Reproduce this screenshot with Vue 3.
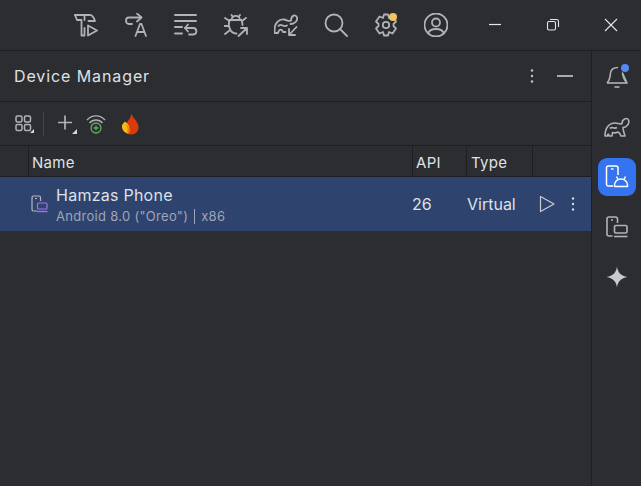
<script setup>
const topIcons = ['build', 'translate', 'wrap', 'bug', 'gradleSync', 'search', 'gear', 'user']
</script>

<template>
  <div class="ide">
    <header class="topbar">
      <div class="top-icons">
        <svg v-for="name in topIcons" :key="name" class="ic24" width="24" height="24" viewBox="0 0 24 24" fill="none" stroke="#b0b2b7" stroke-width="1.800" stroke-linecap="round" stroke-linejoin="round">
          <template v-if="name === 'build'">
            <path d="M1 2H16C18 2 20 5 21 8H14.500" />
            <path d="M1 2L3 7H7.500V22.500H10.500V15" />
            <path d="M10.500 7V2" />
            <path d="M14 12.500L23 17.500L14 22.500Z" />
          </template>
          <template v-else-if="name === 'translate'">
            <path d="M8 11H5C1 11 1 4.500 5 4.500H17" />
            <path d="M13 0.500L17.500 4.500L13 8.500" />
            <path d="M11.500 23L16 11H17.500L22 23M13 19H20.500" />
          </template>
          <template v-else-if="name === 'wrap'">
            <path d="M1 2H22M1 8H22M1 14H8M1 20.500H8" stroke-width="1.900" />
            <path d="M11 15H19C23.500 15 23.500 21.500 19 21.500H15" />
            <path d="M14 11.500L11 15L14 18.500" />
          </template>
          <template v-else-if="name === 'bug'">
            <path d="M7.500 7C7.500 1.500 16 1.500 16 7" />
            <path d="M5.500 7H17.500C18 8.500 18.500 10 18.500 12M5.500 7C3.500 13 6.500 21 12.500 20.500" />
            <path d="M7.500 2L9 4M16 2L14.500 4M1 5L5.500 8M0.500 13H4.500M1 21L5.500 17.500M18 8L22 5" />
            <path d="M14.500 23L23 15M17 15H23V21" />
          </template>
          <template v-else-if="name === 'gradleSync'">
            <path d="M0.500 17C0.500 10 5 6 10 6.500C13 7 15 9 17 7.500C17 2 22 1 23 4.500C24 8 20 11 16.500 11" />
            <path d="M0.500 17V20H4C5 16 8 15.500 9 19H11.500" />
            <path d="M4.500 13C6.500 9.500 9.500 15 13 12.500" />
            <path d="M22.500 14L15.500 21.500M15 16V22H21" />
          </template>
          <template v-else-if="name === 'search'">
            <circle cx="10" cy="10" r="8.500" />
            <path d="M16.500 16.500L23 23" />
          </template>
          <template v-else-if="name === 'gear'">
            <path d="M10 1.500H14L15 5L18.500 3.500L22 8.500L19.500 11V13L22 15.500L18.500 20.500L15 19L14 22.500H10L9 19L5.500 20.500L2 15.500L4.500 13V11L2 8.500L5.500 3.500L9 5Z" />
            <circle cx="12" cy="12" r="3.200" />
          </template>
          <template v-else>
            <circle cx="12" cy="12" r="11.500" />
            <circle cx="12" cy="9.500" r="4" />
            <path d="M4 20.500C6 14.500 18 14.500 20 20.500" />
          </template>
        </svg>
        <span class="gear-dot"></span>
      </div>
      <div class="win-controls">
        <svg width="14" height="14" viewBox="0 0 14 14" stroke="#e6e7ea" stroke-width="1.200" fill="none"><path d="M1 6.500H13" /></svg>
        <svg width="14" height="14" viewBox="0 0 14 14" stroke="#e6e7ea" stroke-width="1.100" fill="none"><rect x="1.500" y="3.500" width="8" height="8.500" rx="1.500" /><path d="M4 1.500H10.500C12 1.500 12.500 2 12.500 3.500V9" /></svg>
        <svg width="14" height="14" viewBox="0 0 14 14" stroke="#e6e7ea" stroke-width="1.100" fill="none"><path d="M1 1L13 13M13 1L1 13" /></svg>
      </div>
    </header>

    <div class="body">
      <section class="panel">
        <div class="panel-head">
          <span class="title">Device Manager</span>
          <div class="head-actions">
            <svg width="4" height="16" viewBox="0 0 4 16" fill="#c3c5ca"><circle cx="2" cy="2.500" r="1.200" /><circle cx="2" cy="8" r="1.200" /><circle cx="2" cy="13.500" r="1.200" /></svg>
            <span class="dash"></span>
          </div>
        </div>

        <div class="tools">
          <svg class="tool-grid" width="20" height="20" viewBox="0 0 20 20" fill="none" stroke="#b0b2b7" stroke-width="1.500">
            <rect x="1" y="2" width="6" height="6" rx="1.500" /><rect x="9.500" y="2" width="6" height="6" rx="1.500" />
            <rect x="1" y="10.500" width="6" height="6" rx="1.500" /><rect x="9.500" y="10.500" width="6" height="6" rx="1.500" />
            <path d="M19 15V19H15Z" fill="#d5d6da" stroke="none" />
          </svg>
          <span class="tool-sep"></span>
          <svg class="tool-plus" width="20" height="20" viewBox="0 0 20 20" fill="none" stroke="#b0b2b7" stroke-width="1.700">
            <path d="M8 1.500V15.500M1 8.500H15" />
            <path d="M20 15V20H15Z" fill="#d5d6da" stroke="none" />
          </svg>
          <svg class="tool-wifi" width="20" height="20" viewBox="0 0 20 20" fill="none" stroke-width="1.300">
            <path d="M1 6C6 0.500 14 0.500 19 6M3.500 9C7 5 13 5 16.500 9" stroke="#b0b2b7" />
            <circle cx="10" cy="14" r="5" stroke="#5fad65" />
            <path d="M10 11.500V16.500M7.500 14H12.500" stroke="#5fad65" />
          </svg>
          <svg class="tool-fire" width="18" height="22" viewBox="0 0 18 22">
            <path d="M10.500 0.500C11.500 5 17.500 8 17.500 14.500C17.500 19 14 21.500 10 21.500C6.500 21.500 4 19 4 15C4 9.500 9.500 7 10.500 0.500Z" fill="#dc3a0c" />
            <path d="M4 8.500C7 10.500 9 13.500 8.500 17.500C8 20.500 6.500 21 5 20C2 18.500 0.500 15.500 1 12.500C1.500 10.500 3 10 4 8.500Z" fill="#f9bb13" />
            <path d="M4.500 11C7.500 13 9 15.500 8.500 19C8 20.700 7 21 6 20.700C7 17 6.500 14 4.500 11Z" fill="#ef7d0e" />
          </svg>
        </div>

        <div class="t-row t-head">
          <span class="cell c-gutter"></span>
          <span class="cell c-name">Name</span>
          <span class="cell c-api">API</span>
          <span class="cell c-type">Type</span>
          <span class="cell c-end"></span>
        </div>

        <div class="t-row device">
          <svg class="dev-icon" width="20" height="20" viewBox="0 0 20 20" fill="none" stroke-width="1.200" stroke-linejoin="round">
            <path d="M7 17H3.500C2.500 17 2 16.500 2 15.500V3.500C2 2.500 2.500 2 3.500 2H9C10 2 10.500 2.500 10.500 3.500V7" stroke="#b4b8c4" />
            <path d="M5 4.500H7" stroke="#b4b8c4" />
            <rect x="7.500" y="9" width="9.500" height="6" rx="1" stroke="#a474e6" />
            <path d="M7 17.500H17.500" stroke="#a474e6" stroke-width="1.400" />
          </svg>
          <div class="dev-text">
            <span class="dev-name">Hamzas Phone</span>
            <span class="dev-sub">Android 8.0 ("Oreo") <i class="bar"></i> x86</span>
          </div>
          <span class="dev-api">26</span>
          <span class="dev-type">Virtual</span>
          <svg class="dev-play" width="18" height="18" viewBox="0 0 18 18" fill="none" stroke="#c9ccd4" stroke-width="1.200" stroke-linejoin="round"><path d="M2.500 1.500L16 9L2.500 16.500Z" /></svg>
          <svg class="dev-more" width="4" height="16" viewBox="0 0 4 16" fill="#d5d7dd"><circle cx="2" cy="2.500" r="1.200" /><circle cx="2" cy="8" r="1.200" /><circle cx="2" cy="13.500" r="1.200" /></svg>
        </div>
      </section>

      <aside class="strip">
        <div class="strip-btn">
          <svg width="24" height="26" viewBox="0 0 24 26" fill="none" stroke="#b0b2b7" stroke-width="1.600" stroke-linejoin="round">
            <path d="M2 19C5 16 5 13 5.500 9C6 5 9 3.500 13 3.500M17.500 9C18 13 19 16 22 19Z" />
            <path d="M2 19H22" />
            <path d="M9.500 23H14.500" />
          </svg>
          <span class="bell-dot"></span>
        </div>
        <div class="strip-btn">
          <svg class="elephant" width="26" height="22" viewBox="0 0 26 22" fill="none" stroke="#b0b2b7" stroke-width="1.600" stroke-linejoin="round">
            <path d="M1 20C1 12 5 7 11 7C14 7 16 9 18 7.500C18 3 23 1 24.500 4C26 8 22 11.500 19 11.500C19 14 20 17 21 20H17C16 17.500 15 16.500 14 16C12 17 10 17 8.500 16.500L8 20H5C5 17.500 3.500 17.500 3.500 20Z" />
            <path d="M6 12.500C8 10 10 13.500 13 11.500" />
          </svg>
        </div>
        <div class="strip-btn active">
          <svg width="26" height="26" viewBox="0 0 26 26" fill="none" stroke="#fff" stroke-width="1.500" stroke-linejoin="round">
            <path d="M9 22H4.500C3.200 22 2.500 21.300 2.500 20V4C2.500 2.700 3.200 2 4.500 2H12C13.300 2 14 2.700 14 4V11" />
            <path d="M7 5H9.500" />
            <path d="M10.500 22.500V21C10.500 17.500 13.500 15 17 15C20.500 15 23.500 17.500 23.500 21V22.500Z" />
            <path d="M12.500 12.500L14 15.500M21.500 12.500L20 15.500" />
          </svg>
        </div>
        <div class="strip-btn">
          <svg width="24" height="24" viewBox="0 0 24 24" fill="none" stroke="#b0b2b7" stroke-width="1.600" stroke-linejoin="round">
            <path d="M7.500 21H4C2.800 21 2 20.300 2 19V4C2 2.800 2.800 2 4 2H10.500C11.800 2 12.500 2.800 12.500 4V8" />
            <path d="M6 5H8" />
            <rect x="9.500" y="10.500" width="12.500" height="7.500" rx="1.200" />
            <path d="M9 21.500H22.500" />
          </svg>
        </div>
        <div class="strip-btn">
          <svg width="22" height="22" viewBox="0 0 22 22" fill="#c8cad0"><path d="M11 0.500C11.800 6.500 15 10 21.500 11C15 12 11.800 15.500 11 21.500C10.200 15.500 7 12 0.500 11C7 10 10.200 6.500 11 0.500Z" /></svg>
        </div>
      </aside>
    </div>
  </div>
</template>

<style>
html, body { margin: 0; background: #2b2d30; }
</style>

<style scoped>
.ide {
  width: 641px;
  height: 486px;
  display: flex;
  flex-direction: column;
  background: #2b2d30;
  color: #dfe1e5;
  font-family: Inter, "Noto Sans", sans-serif;
  overflow: hidden;
}
.topbar {
  height: 50px;
  flex: none;
  display: flex;
  align-items: center;
  padding-left: 74px;
  border-bottom: 1px solid #1e1f22;
}
.top-icons {
  position: relative;
  display: flex;
  gap: 26px;
}
.ic24 { display: block; flex: none; }
.gear-dot {
  position: absolute;
  left: 315px;
  top: 0;
  width: 8px;
  height: 8px;
  border-radius: 50%;
  background: #f2c55c;
}
.win-controls {
  display: flex;
  align-items: center;
  gap: 44px;
  margin-left: 40px;
}
.body {
  flex: 1;
  display: flex;
  min-height: 0;
}
.panel {
  flex: 1;
  min-width: 0;
  display: flex;
  flex-direction: column;
}
.panel-head {
  height: 50px;
  flex: none;
  display: flex;
  align-items: center;
  justify-content: space-between;
  padding: 0 18px 0 14px;
  border-bottom: 1px solid #1e1f22;
}
.title {
  font-size: 16px;
  letter-spacing: 0.9px;
  color: #dfe1e5;
}
.head-actions {
  display: flex;
  align-items: center;
  gap: 23px;
}
.head-actions svg { display: block; }
.dash {
  width: 16px;
  height: 2px;
  background: #a8aaaf;
}
.tools {
  height: 43px;
  flex: none;
  display: flex;
  align-items: center;
  padding-left: 15px;
  border-bottom: 1px solid #1e1f22;
}
.tools svg { flex: none; }
.tool-sep {
  width: 1px;
  height: 24px;
  margin: 0 13px 0 8px;
  background: #43454a;
}
.tool-plus { margin-right: 9px; }
.tool-wifi { margin-right: 15px; }
.t-row { display: flex; }
.t-head {
  height: 30px;
  flex: none;
  align-items: stretch;
  border-bottom: 1px solid #1e1f22;
  font-size: 15px;
  letter-spacing: 0.3px;
  color: #dfe1e5;
}
.cell {
  display: flex;
  align-items: center;
  box-sizing: border-box;
  border-right: 1px solid #1e1f22;
  padding: 2px 0 0 3px;
}
.c-gutter { width: 29px; padding: 0; }
.c-name { width: 384px; }
.c-api { width: 54px; }
.c-type { width: 66px; padding-left: 4px; }
.c-end { border-right: none; }
.device {
  height: 54px;
  flex: none;
  align-items: center;
  background: #2e436e;
}
.dev-icon { margin-left: 30px; flex: none; }
.dev-text {
  width: 356px;
  margin-left: 6px;
  padding-top: 1px;
  display: flex;
  flex-direction: column;
  gap: 2px;
}
.dev-name {
  font-size: 16px;
  line-height: 20px;
  letter-spacing: 0.25px;
  color: #dfe1e5;
}
.dev-sub {
  font-size: 13px;
  line-height: 18px;
  letter-spacing: 0.3px;
  color: #9ea6b8;
}
.bar {
  display: inline-block;
  width: 1px;
  height: 15px;
  margin: 0 2px;
  background: #9ea6b8;
  vertical-align: -3px;
}
.dev-api {
  width: 55px;
  font-size: 16px;
  color: #dfe1e5;
}
.dev-type {
  width: 71px;
  font-size: 16px;
  color: #dfe1e5;
}
.dev-play { flex: none; }
.dev-more { flex: none; margin-left: 15px; }
.strip {
  width: 50px;
  flex: none;
  box-sizing: border-box;
  border-left: 1px solid #1e1f22;
  display: flex;
  flex-direction: column;
  align-items: center;
  padding-top: 7px;
  gap: 12px;
}
.strip-btn {
  position: relative;
  width: 38px;
  height: 38px;
  display: flex;
  align-items: center;
  justify-content: center;
  border-radius: 9px;
}
.strip-btn.active { background: #3574f0; }
.bell-dot {
  position: absolute;
  right: 7px;
  top: 6px;
  width: 8px;
  height: 8px;
  border-radius: 50%;
  background: #548af7;
}
</style>
